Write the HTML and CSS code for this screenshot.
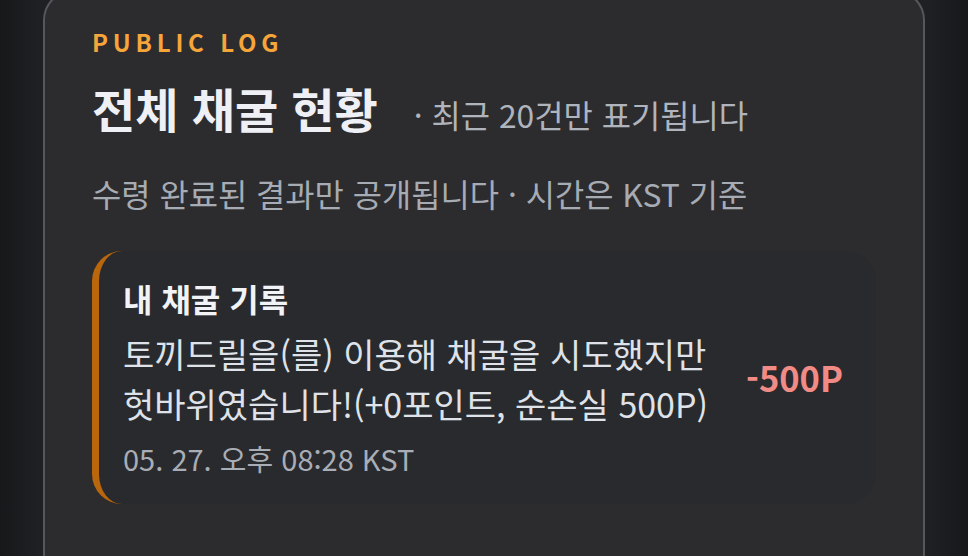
FILE: index.html
```html
<!DOCTYPE html>
<html lang="ko">
<head>
<meta charset="utf-8">
<title>전체 채굴 현황</title>
<link rel="stylesheet" href="styles.css">
</head>
<body>
<main class="page">
  <section class="panel">
    <div class="eyebrow">PUBLIC LOG</div>
    <div class="heading">
      <h1 class="title">전체 채굴 현황</h1>
      <span class="note">· 최근 20건만 표기됩니다</span>
    </div>
    <p class="desc">수령 완료된 결과만 공개됩니다 · 시간은 KST 기준</p>
    <article class="record">
      <div class="record-body">
        <div class="record-title">내 채굴 기록</div>
        <p class="record-text">토끼드릴을(를) 이용해 채굴을 시도했지만<br>헛바위였습니다!(+0포인트, 순손실 500P)</p>
        <div class="record-time">05. 27. 오후 08:28 KST</div>
      </div>
      <div class="record-amount">-500P</div>
    </article>
  </section>
</main>
</body>
</html>
```

FILE: styles.css
```css
html, body {
  margin: 0;
  padding: 0;
  height: 100%;
  overflow: hidden;
}
body {
  background: linear-gradient(90deg, #17181a 0%, #1f2023 4%, #1f2023 96%, #17181a 100%);
  font-family: "Noto Sans CJK KR", "Noto Sans", sans-serif;
}
.page {
  padding: 0 43px;
}
.panel {
  margin-top: -10px;
  background: #2c2c2e;
  border: 2px solid #56575c;
  border-bottom: none;
  border-radius: 30px 30px 0 0;
  padding: 38px 47px 60px;
  min-height: 600px;
  box-sizing: border-box;
}
.eyebrow {
  color: #f6a53a;
  font-size: 24px;
  line-height: 24px;
  font-weight: 700;
  letter-spacing: 0.2em;
}
.heading {
  display: flex;
  align-items: baseline;
  height: 56px;
  margin-top: 26px;
}
.title {
  margin: 0;
  color: #eef0f5;
  font-size: 47px;
  line-height: 56px;
  font-weight: 700;
}
.note {
  margin-left: 36px;
  color: #b0b4bd;
  font-size: 31.8px;
  line-height: 40px;
}
.desc {
  margin: 37px 0 0;
  color: #a6abb4;
  font-size: 31.8px;
  line-height: 40px;
}
.record {
  margin-top: 38px;
  display: flex;
  align-items: center;
  justify-content: space-between;
  background: #292a2d;
  border-left: 7px solid #b9660d;
  border-radius: 30px;
  padding: 27px 33px 28px 24px;
}
.record-title {
  color: #f1f3f7;
  font-size: 32px;
  line-height: 40px;
  font-weight: 700;
}
.record-text {
  margin: 11px 0 0;
  color: #dfe2e9;
  font-size: 34px;
  line-height: 50px;
}
.record-time {
  margin-top: 11px;
  color: #a8adb6;
  font-size: 29px;
  line-height: 36px;
}
.record-amount {
  color: #f28b86;
  font-size: 34.5px;
  font-weight: 700;
  line-height: 44px;
}
```
